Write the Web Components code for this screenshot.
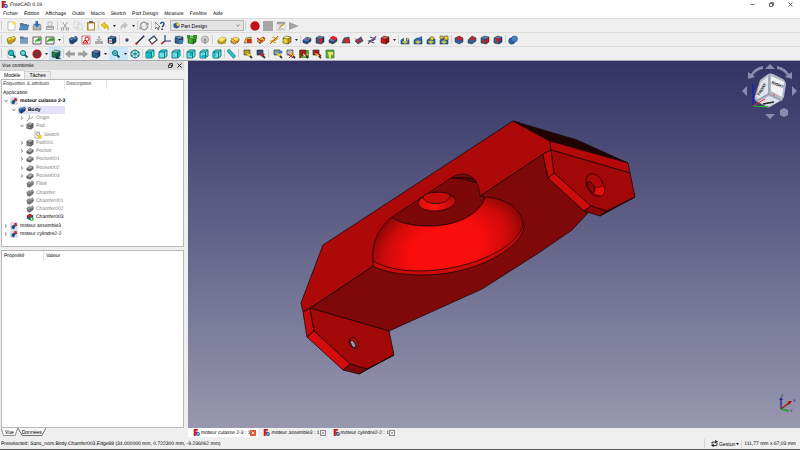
<!DOCTYPE html>
<html lang="fr">
<head>
<meta charset="utf-8">
<title>FreeCAD 0.19</title>
<style>
    html, body { height: 100%; margin: 0; }
    body {
        --bar: #efefef;
        --line: #d2d2d2;
        font: 5px/8px "Liberation Sans", "Noto Sans", sans-serif;
        text-rendering: geometricPrecision;
        color: #000;
        background: var(--bar);
        overflow: hidden;
    }
</style>
</head>
<body>
<fc-window>
    <fc-titlebar slot="title">FreeCAD 0.19</fc-titlebar>
    <fc-menubar slot="menu">
        <a href="#fichier">Fichier</a><a href="#edition">Édition</a><a href="#affichage">Affichage</a><a href="#outils">Outils</a><a href="#macro">Macro</a><a href="#sketch">Sketch</a><a href="#partdesign">Part Design</a><a href="#measure">Measure</a><a href="#fenetre">Fenêtre</a><a href="#aide">Aide</a>
    </fc-menubar>

    <fc-toolbar slot="tools">
        <fc-group icons="new open save print"></fc-group>
        <fc-group lead="2" icons="cut copy paste"></fc-group>
        <fc-group lead="1" icons="undo ▾ redo ▾"></fc-group>
        <fc-group lead="1" icons="refresh"></fc-group>
        <fc-group lead="3" icons="whats"></fc-group>
        <fc-workbench>Part Design</fc-workbench>
        <fc-group lead="4" icons="record stop edit play"></fc-group>
    </fc-toolbar>
    <fc-toolbar slot="tools">
        <fc-group icons="part folder link links ▾"></fc-group>
        <fc-group icons="body sketch import map"></fc-group>
        <fc-group lead="2" icons="point line plane axes binder clone shape"></fc-group>
        <fc-group icons="pad revolve loft pipe helix addbox ▾"></fc-group>
        <fc-group lead="1" icons="pocket hole groove subloft subpipe subhelix subbox ▾"></fc-group>
        <fc-group lead="1" icons="mirror linear polar multi"></fc-group>
        <fc-group lead="2" icons="fillet chamfer draft thick"></fc-group>
        <fc-group lead="2" icons="bool"></fc-group>
    </fc-toolbar>
    <fc-toolbar slot="tools">
        <fc-group icons="fitall fitsel style ▾ box*"></fc-group>
        <fc-group lead="1" icons="left right goto ▾"></fc-group>
        <fc-group lead="1" icons="zoom* ▾* iso"></fc-group>
        <fc-group lead="2" icons="front top side"></fc-group>
        <fc-group lead="2" icons="rear bottom leftside"></fc-group>
        <fc-group lead="1" icons="ruler"></fc-group>
        <fc-group icons="mlin mang"></fc-group>
        <fc-group icons="mrefresh mclear mall m3d mdelta"></fc-group>
    </fc-toolbar>

    <fc-combo slot="side" heading="Vue combinée">
        <fc-tree slot="tree">
            <fc-node bold depth="0" icon="doc" open="yes">moteur culasse 2-3</fc-node>
            <fc-node bold selected depth="1" icon="body" open="yes">Body</fc-node>
            <fc-node dim depth="2" icon="origin" open="no">Origin</fc-node>
            <fc-node dim depth="2" icon="gpad" open="yes">Pad</fc-node>
            <fc-node dim depth="3" icon="gsketch">Sketch</fc-node>
            <fc-node dim depth="2" icon="gpad" open="no">Pad001</fc-node>
            <fc-node dim depth="2" icon="gpocket" open="no">Pocket</fc-node>
            <fc-node dim depth="2" icon="gpocket" open="no">Pocket001</fc-node>
            <fc-node dim depth="2" icon="gpocket" open="no">Pocket002</fc-node>
            <fc-node dim depth="2" icon="gpocket" open="no">Pocket003</fc-node>
            <fc-node dim depth="2" icon="gfillet">Fillet</fc-node>
            <fc-node dim depth="2" icon="gfillet">Chamfer</fc-node>
            <fc-node dim depth="2" icon="gfillet">Chamfer001</fc-node>
            <fc-node dim depth="2" icon="gfillet">Chamfer002</fc-node>
            <fc-node depth="2" icon="tip">Chamfer003</fc-node>
            <fc-node depth="0" icon="doc" open="no">moteur assemble3</fc-node>
            <fc-node depth="0" icon="doc" open="no">moteur cylindre2-2</fc-node>
        </fc-tree>
        <fc-properties slot="props"></fc-properties>
    </fc-combo>

    <fc-view slot="view"></fc-view>
    <fc-doctab slot="docs" active>moteur culasse 2-3 : 1</fc-doctab>
    <fc-doctab slot="docs">moteur assemble3 : 1</fc-doctab>
    <fc-doctab slot="docs">moteur cylindre2-2 : 1</fc-doctab>
    <fc-status slot="status">Preselected: Sans_nom.Body.Chamfer003.Edge88 (34.000000 mm, 0.722300 mm, -9.236062 mm)</fc-status>
</fc-window>

<script>
// ---- icons, all on a 10x10 grid ----
const cube = (top, front, side) =>
    `<path d="M1 3 4 1 9 2 6 4z" fill="${top}"/><path d="M1 3 6 4V9L1 8z" fill="${front}"/><path d="M6 4 9 2V7L6 9z" fill="${side}"/><path d="M1 3 4 1 9 2V7L6 9 1 8zM1 3 6 4 9 2M6 4V9" fill="none" stroke="#222" stroke-width=".5"/>`;
const slab = (a, b) =>
    `<path d="M1 5 5 2 9 3.500V6L5 9 1 7.500z" fill="${b}" stroke="#222" stroke-width=".5"/><path d="M1 5 5 2 9 3.500 5 6.500z" fill="${a}"/>`;
const blob = (a, b) =>
    `<path d="M1 4 4 2 5 3 8 1 9.500 3 9 6 6 8 5 9 2 8.500z" fill="${b}" stroke="#333" stroke-width=".4"/><path d="M1.500 4 4 2.500 5.500 4 3 5.500zM5 3 8 1.500 9 3 6.500 4.500z" fill="${a}"/>`;
const lens = (x, y, c) =>
    `<path d="m${x + 1.5} ${y + 1.5} 3 3" stroke="#125b62" stroke-width="1.800"/><circle cx="${x}" cy="${y}" r="2.500" fill="${c}" stroke="#0a6a72"/>`;
const viewCube = face =>
    `<path d="M1 3 3.500 1H9V7L6.500 9H1z" fill="#6fdfe3" stroke="#08737a" stroke-width=".9"/><path d="${face}" fill="#0fb9c0"/><path d="M1 3H6.500V9M6.500 3 9 1" fill="none" stroke="#08737a" stroke-width=".9"/>`;
const rod = c => `<path d="M1 9 4 5 6 6 9 1" fill="none" stroke="${c}" stroke-width="1"/>`;
const tape = (a, b) =>
    `<path d="M1 1H7V6H1z" fill="${a}" stroke="#222" stroke-width=".6"/><path d="M5 5 9 9" stroke="#333" stroke-width="1.800"/><path d="M3 4 9 5 6 8z" fill="${b}"/>`;
const page = '<path d="M2 1H7L9 3V9H2z" fill="#fff" stroke="#999" stroke-width=".6"/>';
const pattern = extra =>
    `<path d="M1 5 4 3 9 4V9H1z" fill="#2c6aa6" stroke="#123" stroke-width=".5"/><path d="M2 7 5 5 8 7 5 9z" fill="#c9c14a"/>${extra}`;

const ICONS = {
    new: page + '<circle cx="8" cy="2" r="1.800" fill="#f7e24a"/>',
    open: '<path d="M1 2H4L5 3H8V5H1z" fill="#777"/><path d="M0 9 2 4H10L8.500 9z" fill="#4f8cc4" stroke="#28598c" stroke-width=".4"/>',
    save: '<path d="M1 5 2 3H8L9 5V9H1z" fill="#aab2b8" stroke="#667" stroke-width=".5"/><path d="M3.500 0H6V3H8L5 6.500 2 3H3.500z" fill="#2f6fb0"/>',
    print: '<path d="M3 1H7V5H3z" fill="#eee" stroke="#999" stroke-width=".6"/><path d="M1 5H9V9H1z" fill="#a9a9a9"/><path d="M2 7H8V8H2z" fill="#ddd"/>',
    cut: '<path d="M2.500 1 6.500 7M7.500 1 3.500 7" stroke="#a6a6a6"/><circle cx="2.500" cy="8" r="1.300" fill="none" stroke="#999"/><circle cx="7.500" cy="8" r="1.300" fill="none" stroke="#999"/>',
    copy: '<path d="M1 1H6V7H1zM4 3H9V9H4z" fill="#f2f2f2" stroke="#ccc" stroke-width=".7"/>',
    paste: '<path d="M1 1H9V9.500H1z" fill="#b58a2b"/><path d="M2.500 2.500H8V8.500H2.500z" fill="#f4f4f0"/><path d="M3 0H7V2H3z" fill="#666"/>',
    undo: '<path d="M1 4 5 1V3Q9 3 8.500 9 7 6 5 6V8z" fill="#eec71b" stroke="#a78408" stroke-width=".4"/>',
    redo: '<path d="M9 4 5 1V3Q1 3 1.500 9 3 6 5 6V8z" fill="#c2c2c2"/>',
    refresh: '<path d="M1.500 5A3.500 3.500 0 0 1 8 3M8.500 5A3.500 3.500 0 0 1 2 7" fill="none" stroke="#9b9b9b" stroke-width="1.400"/><path d="M9.500 1V4.500H6zM.5 9V5.500H4z" fill="#9b9b9b"/>',
    whats: '<path d="M0 1V8L2 6 3 9 4 8.500 3.200 6H5z" fill="#fff" stroke="#333" stroke-width=".6"/><path d="M5.500 3Q6 1 8 1.500T8 5L7 6" fill="none" stroke="#234a78" stroke-width="1.400"/><path d="M6.300 7.500H8V9H6.300z" fill="#234a78"/>',
    wb: '<path d="M1 3 5 1 9 3V7L5 9 1 7z" fill="#2a5f9e" stroke="#123" stroke-width=".4"/><path d="M5 1 9 3V6L5 5z" fill="#f0d31d"/>',
    record: '<circle cx="5" cy="5" r="4.700" fill="#c4101d"/>',
    stop: '<path d="M0 0H10V10H0z" fill="#a7a7a7"/>',
    edit: '<path d="M1 1H9V9H1z" fill="#fafafa" stroke="#aaa" stroke-width=".5"/><path d="M1 2H9" stroke="#555"/><path d="M2 4H7M2 8H8" stroke="#999" stroke-width=".8"/><path d="M3 7 8 3" stroke="#c99a20" stroke-width="1.400"/>',
    play: '<path d="M0 1 10 5 0 9z" fill="#a2a2a2"/>',
    part: blob('#f6de3a', '#c49e12'),
    folder: '<path d="M1 1.500H4L5 2.500H9V8.500H1z" fill="#5d7d9f"/><path d="M1 4H9V8.500H1z" fill="#7f9dbc"/>',
    link: '<path d="M1 2H9V9H1z" fill="#fff" stroke="#333" stroke-width=".8"/><path d="M3 8Q3 4 6 4V2L9.500 4.500 6 7V6Q4 6 3 8z" fill="#2ba52b"/>',
    links: '<path d="M1 2H9V9H1z" fill="#fff" stroke="#333" stroke-width=".8"/><path d="M2 8Q2 4 4.500 4V2L7 4.500 4.500 7V6Q3 6 2 8zM6.500 2 10 4.500 6.500 7z" fill="#3a9c2b"/>',
    body: blob('#4a86c6', '#1c4680'),
    sketch: '<path d="M1 1H9V9H1z" fill="#fff" stroke="#b44" stroke-width=".7"/><circle cx="6" cy="4" r="2" fill="none" stroke="#d11"/><path d="M2 8 4 5 7 8z" fill="none" stroke="#d11"/>',
    import: '<path d="M1 6H9V9H1z" fill="#aaa"/><path d="M4 1H6V4H8L5 7 2 4H4z" fill="#b6b6b6"/>',
    map: cube('#3f77b3', '#235a99', '#163a66') + '<path d="M2 4H5V8H2z" fill="#c8cede"/><path d="M2.500 6H4.500" stroke="#d22"/>',
    point: '<circle cx="5" cy="5" r="1.700" fill="#24447c"/><circle cx="5" cy="4.500" r=".7" fill="#c33"/>',
    line: '<path d="M1 9 9 1" stroke="#222" stroke-width="1.300"/><circle cx="1.500" cy="8.500" r="1.200" fill="#c22"/><circle cx="8.500" cy="1.500" r="1" fill="#234f94"/>',
    plane: '<path d="M1 5 6 1 9 5 4 9z" fill="#fff" stroke="#234" stroke-width="1.100"/><circle cx="6" cy="1.500" r="1" fill="#2a5ea6"/><circle cx="4" cy="8.500" r="1" fill="#c33"/>',
    axes: '<path d="M4 0V6L0 9M4 6H10" fill="none" stroke="#223c70" stroke-width="1.200"/><path d="M4 6 0 9" stroke="#c22" stroke-width="1.400"/>',
    binder: cube('#74a0cb', '#2b5f99', '#1c467a') + '<path d="M5 5H9V9H5z" fill="#3f7fb0"/><path d="M1 1H4V3H1z" fill="#2c8a96"/>',
    clone: cube('#7de04b', '#3bb323', '#218814') + '<path d="M6 0H10V4H6zM0 0H3V3H0z" fill="#2e9a1d"/>',
    shape: '<circle cx="5" cy="4.500" r="3.500" fill="#d6d6d6" stroke="#999" stroke-width=".9"/><path d="M3 5H7M5 3V9" stroke="#888"/>',
    pad: slab('#fff06a', '#d1ac14') + '<path d="M1 8H9" stroke="#b58d10"/>',
    revolve: slab('#ffe94e', '#d3ad15') + '<path d="M1 3 8 8" stroke="#d22" stroke-width=".7"/>',
    loft: '<path d="M1 8 3 3 8 2 9 8z" fill="#e8c422" stroke="#333" stroke-width=".5"/><path d="M4 4H8V8H4z" fill="#d22"/>',
    pipe: '<path d="M1 6 7 2 9 5 4 9z" fill="#e8c422" stroke="#333" stroke-width=".5"/><path d="M1 3 5 6M7 2 9 4M3 8 7 5" stroke="#d22" stroke-width="1.200"/>',
    helix: rod('#b48f10') + '<path d="M3 2 8 4 2 6 7 8" fill="none" stroke="#d8b11a" stroke-width="1.300"/><path d="M1 9 9 1" stroke="#d22" stroke-width=".8"/>',
    addbox: cube('#fff27a', '#edd028', '#c39d12'),
    pocket: slab('#4c86c3', '#1c4a86') + '<path d="M4 4 6 3.500 7 4.500 5 5.200z" fill="#d22"/>',
    hole: cube('#4c86c3', '#24599a', '#173d6e') + '<path d="M4 3H7V9L4 7z" fill="#d22"/>',
    groove: slab('#4c86c3', '#1c4a86') + '<path d="M2 3 5 1 9 3 6 5zM3 8 8 4" fill="#d22" stroke="#d22" stroke-width=".6"/>',
    subloft: '<path d="M1 8 3 3 8 2 9 8z" fill="#285c9b" stroke="#222" stroke-width=".5"/><path d="M3 4 8 3 8 8H4z" fill="#d22"/>',
    subpipe: '<path d="M1 6 7 2 9 6 4 9z" fill="#285c9b" stroke="#222" stroke-width=".5"/><path d="M1 3 5 6 8 1 6 8 3 7z" fill="#d22"/>',
    subhelix: rod('#17427c') + '<path d="M3 2 8 4 2 6 7 8" fill="none" stroke="#2a5f9e" stroke-width="1.300"/><path d="M1 9 9 1" stroke="#d22" stroke-width=".8"/>',
    subbox: cube('#f05555', '#cc1818', '#920b0b'),
    mirror: pattern('<path d="M4 1H6V6H4z" fill="#eee"/><path d="M7 2 9 4 7 6z" fill="#d9bf22"/>'),
    linear: pattern('<path d="M5 3 9 1V5z" fill="#2c6aa6"/>'),
    polar: pattern('<circle cx="6" cy="3.500" r="2" fill="#e6cf2e" stroke="#333" stroke-width=".5"/>'),
    multi: pattern('<path d="M1 1H4V4H1zM5 1H9V5H5z" fill="#e6cf2e" stroke="#333" stroke-width=".5"/>'),
    fillet: '<path d="M1 3 5 1 9 3V7L5 9 1 7z" fill="#2860a3" stroke="#222" stroke-width=".5"/><path d="M2 3 5 1 8.500 3 8 6 5 5z" fill="#dc1b1b"/>',
    chamfer: '<path d="M1 5 5 1 9 3V6L5 9 1 8z" fill="#2860a3" stroke="#222" stroke-width=".5"/><path d="M3 4 5 1.500 8.500 3 6 6z" fill="#dc1b1b"/>',
    draft: cube('#4c86c3', '#2860a3', '#d01818') + '<path d="M2 5 5 6V8L2 7z" fill="#d01818"/>',
    thick: cube('#4c86c3', '#2860a3', '#1b477e') + '<path d="M3 3 7 3 6.500 8 3.500 6z" fill="#d01818"/>',
    bool: '<circle cx="3.800" cy="6" r="3.200" fill="#2c61a5" stroke="#1a3d6c" stroke-width=".5"/><circle cx="6.500" cy="4" r="3" fill="#4a80c0" stroke="#1a3d6c" stroke-width=".5"/>',
    fitall: page + lens(5, 4, '#25c4cc'),
    fitsel: lens(4, 4, '#5fdde2'),
    style: '<circle cx="5" cy="5" r="3.800" fill="#444" stroke="#c2141f" stroke-width="1.600"/><path d="M2.500 2.500 7.500 7.500" stroke="#c2141f" stroke-width="1.500"/>',
    box: cube('#7fc8a0', '#1f7f4a', '#115b66') + '<path d="M4 5 10 10H5z" fill="#1e3d33"/>',
    left: '<path d="M0 5 5 1V3.500H10V6.500H5V9z" fill="#9d9d9d"/>',
    right: '<path d="M10 5 5 1V3.500H0V6.500H5V9z" fill="#9d9d9d"/>',
    goto: cube('#4c86c3', '#2c5f99', '#17406f') + '<path d="M1 6H5V4L8 7 5 10V8H1z" fill="#245b80"/>',
    zoom: lens(4, 4, '#6fe3ea') + '<path d="M2.500 4H5.500" stroke="#0a6a72"/>',
    iso: '<path d="M5 .8 9 3V7L5 9.200 1 7V3z" fill="#d5fbfb" stroke="#08737a"/><path d="M1 3 5 5 9 3M5 5V9M5 1V5L1 7M5 5 9 7" fill="none" stroke="#08737a" stroke-width=".8"/>',
    front: viewCube('M1 3H6.500V9H1z'),
    top: viewCube('M1 3 3.500 1H9L6.500 3z'),
    side: viewCube('M6.500 3 9 1V7L6.500 9z'),
    rear: viewCube('M3.500 3H7V7H3.500z'),
    bottom: viewCube('M1 9 3.500 6H9L6.500 9z'),
    leftside: viewCube('M1 3 3.500 1V7L1 9z'),
    ruler: '<path d="M1 2 3 0 9.500 7 7.500 9.500z" fill="#28c8cf" stroke="#0a6a72" stroke-width=".6"/><path d="M3 3.500 4 2.500M5 5.500 6 4.500M7 7.500 8 6.500" stroke="#0a6a72" stroke-width=".6"/>',
    mlin: tape('#b59b1e', '#e6cf2e'),
    mang: tape('#2d5480', '#b92222'),
    mrefresh: tape('#7897bb', '#e6cf2e') + '<circle cx="8" cy="3" r="1.500" fill="#4377ae"/>',
    mclear: tape('#bbb', '#e6cf2e') + '<path d="M2 5 7 9M7 5 3 9" stroke="#c22"/>',
    mall: '<path d="M0 1H10V9H0z" fill="#54ad3a"/>' + tape('#b22', '#efe9a0') + '<path d="M1 9 4 3 8 7" fill="none" stroke="#a11" stroke-width="1.400"/>',
    m3d: tape('#a32d2d', '#e8d25a') + '<path d="M3 2 9 7" stroke="#911" stroke-width="1.300"/>',
    mdelta: '<path d="M1 1H9V9H1z" fill="#5cab3b" stroke="#2f6d19" stroke-width=".6"/><path d="M3 3H8V6H6V9H4z" fill="#e9e06c"/>',
    doc: '<path d="M1 1H9V9H1z" fill="#dce6f2" stroke="#89a" stroke-width=".5"/><path d="M2 5 5 3 7 5 5 9 2 8z" fill="#1e4d8e"/><path d="M5 2 8 1 9 5 6 5z" fill="#d21f1f"/>',
    origin: '<path d="M4 1V6L1 9M4 6 9 4" fill="none" stroke="#777" stroke-width=".9"/>',
    gpad: cube('#c8c8c8', '#8d8d8d', '#6f6f6f') + '<path d="M2 5H8" stroke="#555"/>',
    gpocket: slab('#a9a9a9', '#6b6b6b'),
    gfillet: blob('#a0a0a0', '#757575'),
    gsketch: '<path d="M1 1H7V9H1z" fill="#eee" stroke="#999" stroke-width=".7"/><circle cx="5" cy="4" r="2" fill="none" stroke="#999"/><path d="M5 5H9.500V9.500H5z" fill="#f0c91f"/>',
    tip: '<path d="M1 3 5 1 9 3V7L5 9 1 7z" fill="#1f4f8e"/><path d="M1 4 5 1 8 3 5 6z" fill="#d21f1f"/><circle cx="7" cy="7.500" r="2.500" fill="#28b428"/><path d="M7 6V9" stroke="#fff"/>',
    logo: '<path d="M1 0H7V2.500H4V4H6.500V6.500H4V10H1z" fill="#cc1a1a"/><circle cx="7" cy="7" r="2" fill="none" stroke="#26569b" stroke-width="1.700"/>',
    mouse: '<path d="M1.500 6V3H7M8.500 4V8H3" fill="none" stroke="#222" stroke-width="1.300"/><path d="M6 0 10 2.500 6 5zM4 5.500 0 8 4 10z" fill="#222"/>'
};

// Base class: opens the shadow root and fills it once.
class FcElement extends HTMLElement {
    connectedCallback() {
        if (this.shadowRoot) return;
        this.attachShadow({ mode: 'open' });
        this.shadowRoot.innerHTML = `<style>:host,*{box-sizing:border-box}${this.css()}</style>${this.html()}`;
    }
    css() { return ''; }
    html() { return '<slot></slot>'; }
}

class FcIcon extends FcElement {
    css() { return ':host{display:block;width:10px;height:10px}svg{display:block;width:100%;height:100%}'; }
    html() { return `<svg viewBox="0 0 10 10" aria-hidden="true">${ICONS[this.getAttribute('name')] || ''}</svg>`; }
}

class FcWindow extends FcElement {
    css() {
        return `
            :host { display: flex; flex-direction: column; height: 100vh; }
            .tools { display: flex; flex-direction: column; border-bottom: 1px solid #a9a9b4; }
            main { flex: 1; min-height: 0; display: flex; }
            .side { flex: 0 0 23%; min-width: 0; margin-right: 4px; display: flex; }
            .area { flex: 1; min-width: 0; display: flex; flex-direction: column; }
            .docs { display: flex; height: 10px; }
            ::slotted([slot=view]) { flex: 1; min-height: 0; }
            ::slotted([slot=side]) { flex: 1; min-width: 0; }`;
    }
    html() {
        return `
            <slot name="title"></slot>
            <slot name="menu"></slot>
            <div class="tools"><slot name="tools"></slot></div>
            <main>
                <div class="side"><slot name="side"></slot></div>
                <div class="area"><slot name="view"></slot><div class="docs"><slot name="docs"></slot></div></div>
            </main>
            <slot name="status"></slot>`;
    }
}

class FcTitlebar extends FcElement {
    css() {
        return `
            :host { display: flex; align-items: center; height: 9px; background: #fff; padding-left: 1px; }
            fc-icon { width: 7px; height: 7px; margin-right: 2px; }
            .grow { flex: 1; }
            button { width: 19px; height: 9px; padding: 0; border: 0; background: none; display: grid; place-items: center; }
            svg { width: 5px; height: 5px; }`;
    }
    html() {
        const win = (label, d) => `<button aria-label="${label}"><svg viewBox="0 0 5 5"><path d="${d}" fill="none" stroke="#333" stroke-width=".7"/></svg></button>`;
        return `<fc-icon name="logo"></fc-icon><slot></slot><span class="grow"></span>
            ${win('Réduire', 'M.5 2.500H4.500')}${win('Restaurer', 'M.5 1.500H3.500V4.500H.5zM1.500 1.500V.5H4.500V3.500H3.500')}${win('Fermer', 'M.5.5 4.500 4.500M4.500.5.5 4.500')}`;
    }
}

class FcMenubar extends FcElement {
    css() {
        return `
            :host { display: flex; align-items: center; gap: 6px; height: 9px; padding: 0 3px; background: #fff; }
            ::slotted(a) { color: inherit; text-decoration: none; }`;
    }
}

class FcToolbar extends FcElement {
    css() { return ':host{display:flex;align-items:center;height:14px;background:var(--bar);border-top:1px solid #dcdcdc}'; }
}

// One run of tool buttons; "▾" is a narrow menu arrow, a trailing * marks a pressed tool.
class FcGroup extends FcElement {
    css() {
        const lead = this.getAttribute('lead') || 4;
        return `
            :host { display: flex; align-items: center; padding-left: ${lead}px; background: linear-gradient(#cfcfcf, #cfcfcf) 1px 50% / 1px 9px no-repeat; }
            button { width: 13px; height: 13px; padding: 0; border: 0; background: none; display: grid; place-items: center; }
            .arrow { width: 6px; }
            .on { background: #cbe5f8; }
            svg { width: 3px; height: 2px; }`;
    }
    html() {
        return this.getAttribute('icons').split(' ').map(entry => {
            const name = entry.replace('*', '');
            const on = entry.endsWith('*') ? ' on' : '';
            return name === '▾'
                ? `<button class="arrow${on}" aria-label="Plus"><svg viewBox="0 0 3 2"><path d="M0 0H3L1.500 2z" fill="#222"/></svg></button>`
                : `<button class="${on}" aria-label="${name}"><fc-icon name="${name}"></fc-icon></button>`;
        }).join('');
    }
}

class FcWorkbench extends FcElement {
    css() {
        return `
            :host { display: grid; grid-template-columns: 10px 1fr; align-items: center; width: 74px; height: 11px; margin-left: 4px; border: 1px solid #b9b9b9; background: #e4e4e4; }
            fc-icon { width: 7px; height: 7px; margin-left: 2px; }
            select { appearance: none; font: inherit; color: inherit; border: 0; padding: 0; width: 100%; height: 8px; background: none; }
            .box { display: flex; align-items: center; padding-right: 3px; }
            svg { width: 4px; height: 3px; }`;
    }
    html() {
        return `<fc-icon name="wb"></fc-icon><div class="box"><select aria-label="Atelier"><option>${this.textContent}</option></select>
            <svg viewBox="0 0 4 3"><path d="M.3.5 2 2.300 3.700.5" fill="none" stroke="#444" stroke-width=".6"/></svg></div>`;
    }
}

class FcCombo extends FcElement {
    css() {
        return `
            :host { display: flex; flex-direction: column; }
            header { display: flex; align-items: center; height: 9px; padding-left: 2px; background: #dadada; }
            h2 { flex: 1; margin: 0; font: inherit; }
            header button { width: 9px; height: 8px; padding: 0; border: 0; background: none; display: grid; place-items: center; }
            header svg { width: 5px; height: 5px; }
            .tabs { display: flex; height: 9px; align-items: flex-end; }
            .tabs button { font: inherit; color: inherit; height: 8px; padding: 0 4px; border: 1px solid var(--line); border-width: 1px 1px 0 0; background: #ececec; line-height: 7px; }
            .tabs .on { background: #fff; height: 9px; }
            .tree, .props { display: flex; min-height: 0; margin-left: 1px; border: 1px solid #b8b8b8; background: #fff; }
            .tree { flex: 168; }
            .props { flex: 178; margin-top: 3px; }
            .props ::slotted(*), .tree ::slotted(*) { flex: 1; min-width: 0; }
            .pages { display: flex; height: 10px; padding-left: 1px; }
            .pages button { font: inherit; color: inherit; line-height: 7px; height: 8px; padding: 0 4px; border: 0; background: none; position: relative; z-index: 0; }
            .pages svg { position: absolute; inset: 0; width: 100%; height: 100%; z-index: -1; }`;
    }
    html() {
        const sheet = '<svg viewBox="0 0 20 8" preserveAspectRatio="none"><path d="M0 0 3 7.500H17L20 0" fill="#f8f8f8" stroke="#555" stroke-width=".7"/></svg>';
        return `
            <header><h2>${this.getAttribute('heading')}</h2>
                <button aria-label="Détacher"><svg viewBox="0 0 5 5"><path d="M.5 2H3.500V4.500H.5zM1.500 2V.5H4.500V3.500H3.500" fill="none" stroke="#222" stroke-width=".8"/></svg></button>
                <button aria-label="Fermer"><svg viewBox="0 0 5 5"><path d="M.5.5 4.500 4.500M4.500.5.5 4.500" stroke="#222"/></svg></button></header>
            <div class="tabs"><button class="on">Modèle</button><button>Tâches</button></div>
            <div class="tree"><slot name="tree"></slot></div>
            <div class="props"><slot name="props"></slot></div>
            <div class="pages"><button>${sheet}Vue</button><button>${sheet}Données</button></div>`;
    }
}

class FcTree extends FcElement {
    css() {
        return `
            :host { display: flex; flex-direction: column; }
            .head { display: flex; height: 9px; line-height: 9px; color: #333; }
            .head span { padding-left: 1px; border-right: 1px solid #e4e4e4; }
            .head span:first-child { flex: 0 0 35%; }
            .head span:last-child { flex: 0 0 23%; }
            .rows { flex: 1; display: grid; grid-auto-rows: 1fr; align-items: center; margin-bottom: 8px; }
            .app { padding-left: 1px; }`;
    }
    html() {
        return `<div class="head"><span>Étiquettes &amp; attributs</span><span>Description</span></div>
            <div class="rows" role="tree"><div class="app">Application</div><slot></slot></div>`;
    }
}

class FcNode extends FcElement {
    css() {
        const depth = Number(this.getAttribute('depth'));
        return `
            :host { display: flex; align-items: center; height: 8px; margin-right: 65%; padding-left: ${depth * 8}px; white-space: nowrap; }
            :host([dim]) { color: #808080; }
            :host([bold]) { font-weight: bold; }
            :host([selected]) { background: linear-gradient(#e2e2fa, #e2e2fa) 16px 0 no-repeat; }
            .mark { flex: 0 0 7px; display: grid; place-items: center; }
            .mark svg { width: 4px; height: 4px; }
            fc-icon { flex: none; width: 8px; height: 8px; margin: 0 2px 0 1px; }`;
    }
    html() {
        const open = this.getAttribute('open');
        const d = open === 'yes' ? 'M.5 1 2 2.700 3.500 1' : 'M1 .5 2.700 2 1 3.500';
        const mark = open ? `<svg viewBox="0 0 4 4"><path d="${d}" fill="none" stroke="#555" stroke-width=".8"/></svg>` : '';
        return `<span class="mark">${mark}</span><fc-icon name="${this.getAttribute('icon')}"></fc-icon><slot></slot>`;
    }
}

class FcProperties extends FcElement {
    css() {
        return `
            :host { display: block; }
            table { width: 100%; border-collapse: collapse; table-layout: fixed; }
            th { font-weight: normal; text-align: left; padding: 1px 2px; height: 8px; }
            th:first-child { width: 23%; border-right: 1px solid #e0e0e0; }`;
    }
    html() { return '<table><thead><tr><th>Propriété</th><th>Valeur</th></tr></thead></table>'; }
}

class FcDoctab extends FcElement {
    css() {
        return `
            :host { display: flex; align-items: center; height: 9px; padding: 0 2px 0 5px; white-space: nowrap; }
            :host([active]) { background: #fff; }
            fc-icon { width: 7px; height: 7px; margin-right: 1px; }
            button { width: 6px; height: 6px; padding: 0; border: 1px solid #8d8d8d; background: #fff; display: grid; place-items: center; }
            :host([active]) button { background: #e2512c; border-color: #e2512c; }
            svg { width: 4px; height: 4px; }`;
    }
    html() {
        const c = this.hasAttribute('active') ? '#fff' : '#999';
        return `<fc-icon name="logo"></fc-icon><slot></slot>
            <button aria-label="Fermer"><svg viewBox="0 0 4 4"><path d="M.5.5 3.500 3.500M3.500.5.5 3.500" stroke="${c}" stroke-width=".8"/></svg></button>`;
    }
}

class FcStatus extends FcElement {
    css() {
        return `
            :host { display: flex; align-items: center; height: 12px; padding: 0 4px 0 1px; border-bottom: 1px solid #5c5c5c; background: var(--bar); }
            .text { flex: 1; }
            button { display: flex; align-items: center; gap: 1px; font: inherit; color: inherit; border: 0; background: none; padding: 0 2px 0 6px; border-left: 1px solid var(--line); height: 9px; }
            fc-icon { width: 7px; height: 7px; }
            .arrow { width: 3px; height: 2px; }
            .size { border-left: 1px solid var(--line); padding-left: 2px; }`;
    }
    html() {
        return `<span class="text"><slot></slot></span>
            <button><fc-icon name="mouse"></fc-icon>Gestun<svg class="arrow" viewBox="0 0 3 2"><path d="M0 0H3L1.500 2z"/></svg></button>
            <span class="size">111,77 mm x 67,03 mm</span>`;
    }
}

class FcView extends FcElement {
    css() {
        return `
            :host { display: block; position: relative; background: linear-gradient(#333365, #9898b0); overflow: hidden; }
            .model { display: block; width: 100%; height: 100%; }
            .cube { position: absolute; top: 2px; right: 0; width: 60px; height: 60px; }
            .axis { position: absolute; right: 2px; bottom: 12px; width: 22px; height: 22px; }`;
    }
    html() {
        return `
        <svg class="model" viewBox="188 61 612 367" stroke="#1d0505" stroke-width=".8" stroke-linejoin="round">
            <defs>
                <radialGradient id="dome" gradientUnits="userSpaceOnUse" cx="0" cy="0" r="92" gradientTransform="translate(446 248) rotate(-20) scale(1 .66)">
                    <stop offset="0" stop-color="#ff0f0f"/><stop offset=".42" stop-color="#f80d0d"/><stop offset=".7" stop-color="#cc0a0a"/><stop offset=".85" stop-color="#9a0707"/><stop offset="1" stop-color="#5a0404"/>
                </radialGradient>
                <linearGradient id="boss" x2="1"><stop offset="0" stop-color="#e00c0c"/><stop offset=".45" stop-color="#ff1212"/><stop offset="1" stop-color="#b00808"/></linearGradient>
            </defs>
            <path fill="#7f0909" d="M310 308 373 266 480 196 543 154 548 178 584 211 588 213 572 230 540 252 482 289 389 331z"/>
            <path fill="#ad0909" d="M513 121 323 245 301 303 303 312 310 308 373 266 480 196 543 154 551 150 550 141z"/>
            <path fill="#1f0404" d="M513 121 577 140 628 163 550 141z"/>
            <path fill="#b50909" d="M550 141 628 163 630 173 551 150z"/>
            <path fill="#a20808" d="M551 150 630 173 635 197 607 211 590 206 554 173z"/>
            <path fill="#c40b0b" d="M543 154 551 150 554 173 548 178z"/>
            <path fill="#cf0c0c" d="M548 178 554 173 591 206 584 211z"/>
            <path fill="#850707" d="M591 206 607 211 600 216 584 211z"/>
            <path fill="#1d0505" d="M600 216 607 211 635 197z"/>
            <path fill="#7d0808" d="M392 217 451 178Q456 174 462 174C473 174 479 183 480 196L485 197C481 213 458 226 430 226 412 226 399 223 392 217z"/>
            <path fill="#5b0606" d="M452 178Q464 176 474 179L477 183Q464 178 452 178z"/>
            <path fill="#cc0a0a" d="M373 261 373 266C384 272 402 275 423 275 478 275 524 246 524 225L522 222z"/>
            <path fill="url(#dome)" d="M373 261C371 243 380 226 392 217 399 223 412 226 430 226 458 226 481 213 485 197 505 198 520 208 523 222 524 243 476 271 417 271 400 271 383 267 373 261z"/>
            <ellipse cx="437" cy="202" rx="19" ry="9" transform="rotate(-5 437 202)" fill="url(#boss)"/>
            <path fill="#c50a0a" d="M423 197C424 191 449 191 450 195 450 206 424 206 423 197z"/>
            <path fill="none" stroke-width=".6" d="M419 199 423 197M450 196 454 197"/>
            <ellipse cx="595" cy="185" rx="8" ry="12" transform="rotate(-27 595 185)" fill="#b00909"/>
            <path fill="#e60e0e" stroke-width=".5" d="M587 183Q591 182 595 188L604 186Q606 195 601 196 592 195 587 183z"/>
            <ellipse cx="591" cy="187" rx="3" ry="6" transform="rotate(-30 591 187)" fill="#8c0707"/>
            <path fill="#c40b0b" d="M303 312 310 308 314 331 307 337z"/>
            <path fill="#a20808" d="M310 308 389 331 394 355 367 369 350 364 314 331z"/>
            <path fill="#d60c0c" d="M307 337 314 331 350 364 343 370z"/>
            <path fill="#7d0707" d="M350 364 367 369 359 374 343 370z"/>
            <path fill="#1d0505" d="M359 374 367 369 394 355z"/>
            <ellipse cx="354" cy="343" rx="4" ry="6" transform="rotate(-27 354 343)" fill="#b30a0a"/>
            <ellipse cx="353" cy="344" rx="2" ry="4" transform="rotate(-30 353 344)" fill="#9b9bad"/>
        </svg>
        <svg class="cube" viewBox="740 63 60 60">
            <g fill="#8c8cb0">
                <path d="M770 64 775 69H765zM770 119 765 114H775zM742 91 747 86V96zM797 91 792 86V96z"/>
                <path d="M763 66Q754 68 751 74L748 72 748 79 755 77 753 75Q757 70 763 69zM777 66Q786 68 789 74L792 72 792 79 785 77 787 75Q783 70 777 69z"/>
                <path d="M780 110 784 108 788 110V115L784 117 780 115z"/>
            </g>
            <path d="M753 105V84" stroke="#1010d0"/>
            <path d="M760 80 768 74Q770 73 773 74L783 79Q786 81 786 84L784 97Q783 100 780 101L770 107Q768 108 765 106L756 101Q754 99 755 96z" fill="#b4b8c6"/>
            <path d="M761 82 768 76 768 93 758 99 756 96z" fill="#e2e5ee"/>
            <path d="M771 76 784 82 782 97 771 91z" fill="#f2f3f8"/>
            <path d="M769 96 780 101 769 106 758 102z" fill="#dfe1ea"/>
            <path d="M769 75V94L756 101M769 94 782 101" fill="none" stroke="#8f94a8"/>
            <text font-size="4" font-weight="bold" fill="#111" text-anchor="middle" transform="translate(763 90) rotate(-58)">FRONT</text>
            <text font-size="4" font-weight="bold" fill="#111" text-anchor="middle" transform="translate(777 86) rotate(24)">RIGHT</text>
            <path d="M763 104 774 102" stroke="#222" stroke-width="1.500"/>
            <path d="M753 106 765 99" stroke="#e02020"/><circle cx="774" cy="95" r="1" fill="#e86a4a"/><path d="M753 106 768 107" stroke="#20c020"/>
        </svg>
        <svg class="axis" viewBox="0 0 22 22">
            <path d="M5 15V5" stroke="#2a2a90" stroke-width="1.400"/><path d="M5 15 13 9" stroke="#a01515" stroke-width="1.500"/><path d="M5 15 13 17" stroke="#1d9a2a" stroke-width="1.500"/>
            <path d="M3 6 5 3 7 6z" fill="#2a2a90"/><path d="M12 7 16 7 13 11z" fill="#a01515"/>
            <g font-size="4" fill="#222"><text x="5" y="3">Z</text><text x="17" y="8">X</text><text x="14" y="18">Y</text></g>
        </svg>`;
    }
}

customElements.define('fc-icon', FcIcon);
customElements.define('fc-window', FcWindow);
customElements.define('fc-titlebar', FcTitlebar);
customElements.define('fc-menubar', FcMenubar);
customElements.define('fc-toolbar', FcToolbar);
customElements.define('fc-group', FcGroup);
customElements.define('fc-workbench', FcWorkbench);
customElements.define('fc-combo', FcCombo);
customElements.define('fc-tree', FcTree);
customElements.define('fc-node', FcNode);
customElements.define('fc-properties', FcProperties);
customElements.define('fc-doctab', FcDoctab);
customElements.define('fc-status', FcStatus);
customElements.define('fc-view', FcView);
</script>
</body>
</html>
